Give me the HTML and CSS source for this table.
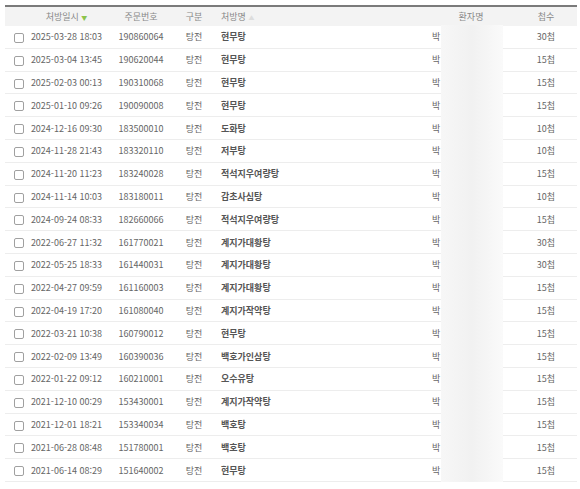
FILE: index.html
```html
<!DOCTYPE html>
<html lang="ko">
<head>
<meta charset="utf-8">
<link rel="stylesheet" href="styles.css">
</head>
<body>
<div class="wrap">
<table class="grid">
<colgroup>
<col class="c-cb"><col class="c-date"><col class="c-no"><col class="c-type"><col class="c-rx"><col class="c-pt"><col class="c-qty">
</colgroup>
<thead>
<tr>
<th></th>
<th>처방일시 <span class="sort-on">▼</span></th>
<th>주문번호</th>
<th>구분</th>
<th class="left">처방명 <span class="sort-off">▲</span></th>
<th>환자명</th>
<th>첩수</th>
</tr>
</thead>
<tbody id="rows">
<tr><td><span class="cb"></span></td><td>2025-03-28 18:03</td><td>190860064</td><td>탕전</td><td class="rx">현무탕</td><td class="pt">박</td><td>30첩</td></tr>
<tr><td><span class="cb"></span></td><td>2025-03-04 13:45</td><td>190620044</td><td>탕전</td><td class="rx">현무탕</td><td class="pt">박</td><td>15첩</td></tr>
<tr><td><span class="cb"></span></td><td>2025-02-03 00:13</td><td>190310068</td><td>탕전</td><td class="rx">현무탕</td><td class="pt">박</td><td>15첩</td></tr>
<tr><td><span class="cb"></span></td><td>2025-01-10 09:26</td><td>190090008</td><td>탕전</td><td class="rx">현무탕</td><td class="pt">박</td><td>15첩</td></tr>
<tr><td><span class="cb"></span></td><td>2024-12-16 09:30</td><td>183500010</td><td>탕전</td><td class="rx">도화탕</td><td class="pt">박</td><td>10첩</td></tr>
<tr><td><span class="cb"></span></td><td>2024-11-28 21:43</td><td>183320110</td><td>탕전</td><td class="rx">저부탕</td><td class="pt">박</td><td>10첩</td></tr>
<tr><td><span class="cb"></span></td><td>2024-11-20 11:23</td><td>183240028</td><td>탕전</td><td class="rx">적석지우여량탕</td><td class="pt">박</td><td>15첩</td></tr>
<tr><td><span class="cb"></span></td><td>2024-11-14 10:03</td><td>183180011</td><td>탕전</td><td class="rx">감초사심탕</td><td class="pt">박</td><td>10첩</td></tr>
<tr><td><span class="cb"></span></td><td>2024-09-24 08:33</td><td>182660066</td><td>탕전</td><td class="rx">적석지우여량탕</td><td class="pt">박</td><td>15첩</td></tr>
<tr><td><span class="cb"></span></td><td>2022-06-27 11:32</td><td>161770021</td><td>탕전</td><td class="rx">계지가대황탕</td><td class="pt">박</td><td>30첩</td></tr>
<tr><td><span class="cb"></span></td><td>2022-05-25 18:33</td><td>161440031</td><td>탕전</td><td class="rx">계지가대황탕</td><td class="pt">박</td><td>30첩</td></tr>
<tr><td><span class="cb"></span></td><td>2022-04-27 09:59</td><td>161160003</td><td>탕전</td><td class="rx">계지가대황탕</td><td class="pt">박</td><td>15첩</td></tr>
<tr><td><span class="cb"></span></td><td>2022-04-19 17:20</td><td>161080040</td><td>탕전</td><td class="rx">계지가작약탕</td><td class="pt">박</td><td>15첩</td></tr>
<tr><td><span class="cb"></span></td><td>2022-03-21 10:38</td><td>160790012</td><td>탕전</td><td class="rx">현무탕</td><td class="pt">박</td><td>15첩</td></tr>
<tr><td><span class="cb"></span></td><td>2022-02-09 13:49</td><td>160390036</td><td>탕전</td><td class="rx">백호가인삼탕</td><td class="pt">박</td><td>15첩</td></tr>
<tr><td><span class="cb"></span></td><td>2022-01-22 09:12</td><td>160210001</td><td>탕전</td><td class="rx">오수유탕</td><td class="pt">박</td><td>15첩</td></tr>
<tr><td><span class="cb"></span></td><td>2021-12-10 00:29</td><td>153430001</td><td>탕전</td><td class="rx">계지가작약탕</td><td class="pt">박</td><td>15첩</td></tr>
<tr><td><span class="cb"></span></td><td>2021-12-01 18:21</td><td>153340034</td><td>탕전</td><td class="rx">백호탕</td><td class="pt">박</td><td>15첩</td></tr>
<tr><td><span class="cb"></span></td><td>2021-06-28 08:48</td><td>151780001</td><td>탕전</td><td class="rx">백호탕</td><td class="pt">박</td><td>15첩</td></tr>
<tr><td><span class="cb"></span></td><td>2021-06-14 08:29</td><td>151640002</td><td>탕전</td><td class="rx">현무탕</td><td class="pt">박</td><td>15첩</td></tr>
</tbody>
</table>
<div class="blur"></div>
</div>
</body>
</html>
```
FILE: styles.css
```css
html, body {
  margin: 0;
  padding: 0;
  background: #fff;
}
body {
  font-family: "Noto Sans CJK KR", "Noto Sans", sans-serif;
  font-size: 9px;
  color: #666;
}
.wrap {
  position: relative;
  padding: 5px 3px 0 5px;
}
.grid {
  width: 572px;
  border-collapse: collapse;
  table-layout: fixed;
  border-top: 2px solid #7a7a7a;
}
.c-cb { width: 22px; }
.c-date { width: 79px; }
.c-no { width: 70px; }
.c-type { width: 36px; }
.c-rx { width: 215px; }
.c-pt { width: 88px; }
.c-qty { width: 62px; }

.grid th {
  background: #f3f3f3;
  height: 19px;
  padding: 0;
  font-weight: normal;
  color: #888;
  text-align: center;
  white-space: nowrap;
}
.grid th.left { text-align: left; padding-left: 9px; }
.sort-on { color: #8bc34a; font-size: 6px; vertical-align: middle; }
.sort-off { color: #ddd; font-size: 6px; vertical-align: middle; }

.grid td {
  height: 21.8px;
  padding: 0;
  text-align: center;
  border-bottom: 1px solid #ededed;
  white-space: nowrap;
}
.grid td.rx {
  text-align: left;
  padding-left: 9px;
  font-weight: bold;
  color: #555;
}
.grid td.pt {
  text-align: left;
  padding-left: 5px;
}
.cb {
  display: inline-block;
  width: 8px;
  height: 8px;
  border: 1px solid #a0a0a0;
  border-radius: 2px;
  vertical-align: middle;
  margin-left: 5px;
  background: #fff;
}
.blur {
  position: absolute;
  left: 441px;
  top: 25px;
  width: 62px;
  height: 458px;
  background: linear-gradient(to right, #f7f7f7 0%, #f1f1f1 50%, #fafafa 100%);
}
```
